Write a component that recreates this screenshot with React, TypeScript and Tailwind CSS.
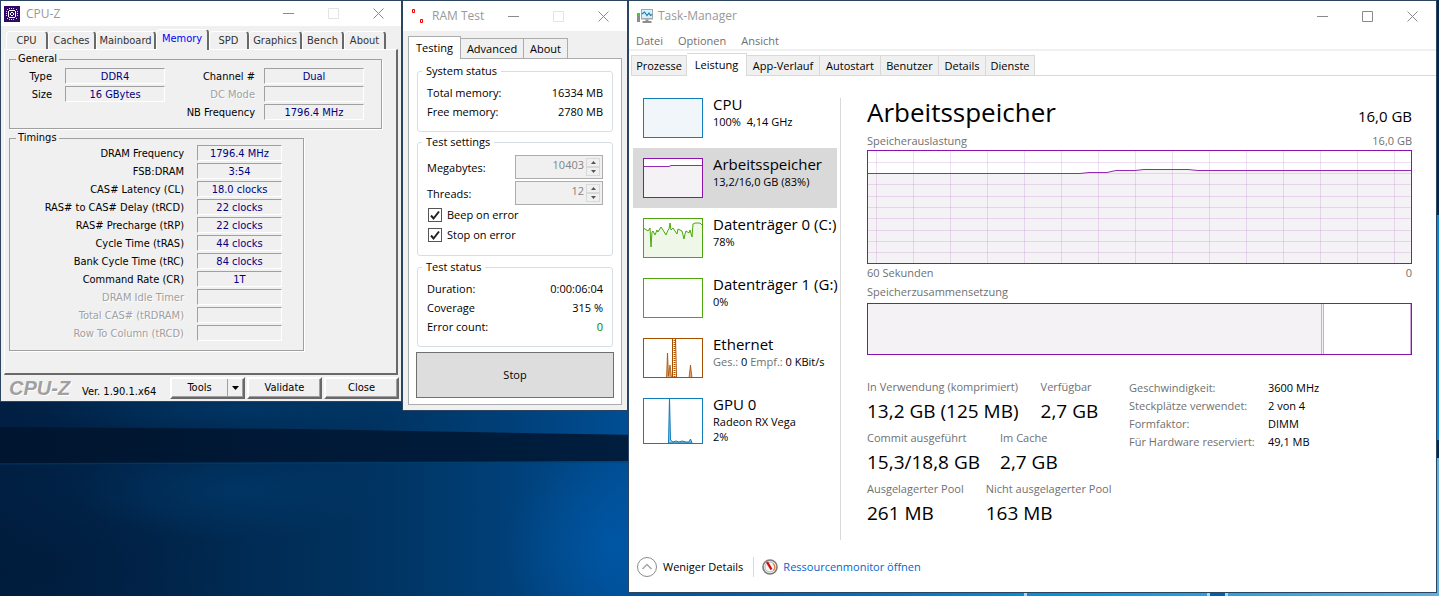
import { useId, useState } from 'react'
import type { ReactNode } from 'react'

const UI_FONT = "font-['Open_Sans','Segoe_UI',sans-serif]"
const CPUZ_FONT = "font-['DejaVu_Sans_Condensed','DejaVu_Sans',sans-serif]"

function Wallpaper() {
  return (
    <svg
      className="absolute inset-0 h-full w-full"
      viewBox="0 0 1439 596"
      preserveAspectRatio="none"
      aria-hidden="true"
    >
      <defs>
        <linearGradient id="sky" x1="0" x2="1" y1="0" y2="0">
          <stop offset="0" stopColor="#001f42" />
          <stop offset="0.14" stopColor="#00284f" />
          <stop offset="0.26" stopColor="#003360" />
          <stop offset="0.36" stopColor="#00417a" />
          <stop offset="0.44" stopColor="#004f96" />
          <stop offset="0.6" stopColor="#0070c0" />
          <stop offset="0.75" stopColor="#0a96d8" />
          <stop offset="1" stopColor="#5fb0dc" />
        </linearGradient>
        <linearGradient id="beam" x1="0" x2="1" y1="0" y2="0">
          <stop offset="0" stopColor="#00152f" />
          <stop offset="0.4" stopColor="#001d3d" />
          <stop offset="1" stopColor="#002a55" />
        </linearGradient>
        <radialGradient id="haze">
          <stop offset="0" stopColor="#005cb0" stopOpacity="0.6" />
          <stop offset="1" stopColor="#005cb0" stopOpacity="0" />
        </radialGradient>
        <radialGradient id="mist">
          <stop offset="0" stopColor="#003f74" stopOpacity="0.5" />
          <stop offset="1" stopColor="#003f74" stopOpacity="0" />
        </radialGradient>
        <radialGradient id="shade">
          <stop offset="0" stopColor="#00152f" stopOpacity="0.35" />
          <stop offset="1" stopColor="#00152f" stopOpacity="0" />
        </radialGradient>
      </defs>
      <rect width="1439" height="596" fill="url(#sky)" />
      <ellipse cx="615" cy="545" rx="110" ry="100" fill="url(#haze)" />
      <ellipse cx="230" cy="410" rx="190" ry="26" fill="url(#mist)" />
      <ellipse cx="230" cy="490" rx="160" ry="50" fill="url(#mist)" />
      <ellipse cx="40" cy="570" rx="180" ry="80" fill="url(#shade)" />
      <path d="M0 427 L300 429 L640 435 L1439 440 V458 L640 461 L0 463 Z" fill="url(#beam)" />
      <path d="M0 464 L640 462" stroke="#00406f" strokeWidth="1" opacity="0.7" />
      <path d="M1436 0 H1439 V215 H1436 Z" fill="#04264c" />
      <path d="M1436 215 H1439 V440 H1436 Z" fill="#0a86d2" />
      <path d="M1024 592 h3 v4 h-3 Z M1207 592 h3 v4 h-3 Z M1225 592 h3 v4 h-3 Z" fill="#a9d8f2" />
      <path d="M1210 592 h15 v4 h-15 Z" fill="#0060b0" />
    </svg>
  )
}

function WindowControls({ fixedSize = false }: { fixedSize?: boolean }) {
  const cell = 'grid w-[45px] place-items-center text-[#8a8a8a] hover:bg-gray-100'
  return (
    <div className="flex self-stretch">
      <button type="button" aria-label="Minimize" className={cell}>
        <svg width="11" height="11" viewBox="0 0 11 11">
          <path d="M0 5.5 H11" stroke="currentColor" />
        </svg>
      </button>
      <button type="button" aria-label="Maximize" disabled={fixedSize} className="grid w-[45px] place-items-center">
        <svg width="11" height="11" viewBox="0 0 11 11" className={fixedSize ? 'text-[#e3e3e3]' : 'text-[#8a8a8a]'}>
          <path d="M0.5 0.5 H10.5 V10.5 H0.5 Z" fill="none" stroke="currentColor" />
        </svg>
      </button>
      <button type="button" aria-label="Close" className={cell}>
        <svg width="11" height="11" viewBox="0 0 11 11">
          <path d="M0.5 0.5 L10.5 10.5 M10.5 0.5 L0.5 10.5" stroke="currentColor" />
        </svg>
      </button>
    </div>
  )
}

/* ---------- CPU-Z ---------- */

const cpuzTabs = [
  { name: 'CPU', width: 'w-[42px]' },
  { name: 'Caches', width: 'w-[48px]' },
  { name: 'Mainboard', width: 'w-[60px]' },
  { name: 'Memory', width: 'w-[53px]' },
  { name: 'SPD', width: 'w-[40px]' },
  { name: 'Graphics', width: 'w-[53px]' },
  { name: 'Bench', width: 'w-[42px]' },
  { name: 'About', width: 'w-[42px]' },
]

const timings = [
  ['DRAM Frequency', '1796.4 MHz'],
  ['FSB:DRAM', '3:54'],
  ['CAS# Latency (CL)', '18.0 clocks'],
  ['RAS# to CAS# Delay (tRCD)', '22 clocks'],
  ['RAS# Precharge (tRP)', '22 clocks'],
  ['Cycle Time (tRAS)', '44 clocks'],
  ['Bank Cycle Time (tRC)', '84 clocks'],
  ['Command Rate (CR)', '1T'],
  ['DRAM Idle Timer', ''],
  ['Total CAS# (tRDRAM)', ''],
  ['Row To Column (tRCD)', ''],
]

function ChipIcon() {
  return (
    <svg width="16" height="16" viewBox="0 0 16 16" shapeRendering="crispEdges">
      <rect width="16" height="16" fill="#2e0a66" />
      <path
        d="M5 4 h6 v1 h-6 Z M5 11 h6 v1 h-6 Z M4 5 h1 v6 h-1 Z M11 5 h1 v6 h-1 Z M7 6 h2 v1 h-2 Z M7 9 h2 v1 h-2 Z M6 7 h1 v2 h-1 Z M9 7 h1 v2 h-1 Z"
        fill="#fff"
      />
      <path
        d="M5 2 h1 v1 h-1 Z M7 2 h1 v1 h-1 Z M9 2 h1 v1 h-1 Z M5 13 h1 v1 h-1 Z M7 13 h1 v1 h-1 Z M9 13 h1 v1 h-1 Z M2 5 h1 v1 h-1 Z M2 7 h1 v1 h-1 Z M2 9 h1 v1 h-1 Z M13 5 h1 v1 h-1 Z M13 7 h1 v1 h-1 Z M13 9 h1 v1 h-1 Z M3 3 h1 v1 h-1 Z M12 3 h1 v1 h-1 Z M3 12 h1 v1 h-1 Z M12 12 h1 v1 h-1 Z"
        fill="#e6dcf5"
      />
    </svg>
  )
}

function Readout({ label, value }: { label: string; value: string }) {
  const id = useId()
  return (
    <>
      <label
        htmlFor={id}
        className={value ? 'pt-0.5 text-right text-black' : 'pt-0.5 text-right text-[#a0a0a0] [text-shadow:1px_1px_0_#fff]'}
      >
        {label}
      </label>
      <input
        id={id}
        readOnly
        value={value}
        className="h-4 w-full min-w-0 border border-t-[#a0a0a0] border-r-white border-b-white border-l-[#a0a0a0] bg-transparent text-center text-[#000080] outline-none"
      />
    </>
  )
}

function CpuzGroup({ title, children, className }: { title: string; children: ReactNode; className: string }) {
  return (
    <fieldset className={`ml-1 border border-[#a0a0a0] shadow-[1px_1px_0_#fff] ${className}`}>
      <legend className="ml-1.5 px-0.5 leading-[14px]">{title}</legend>
      {children}
    </fieldset>
  )
}

const raised =
  'border-2 border-t-white border-l-white border-r-[#696969] border-b-[#696969] shadow-[inset_-1px_-1px_0_#a0a0a0]'

function CpuzWindow() {
  const [tab, setTab] = useState('Memory')
  return (
    <section className={`w-[402px] shrink-0 border border-[#2b4560] bg-[#f0f0f0] text-[11px] leading-[14px] ${CPUZ_FONT}`}>
      <header className="flex h-[25px] items-center bg-white pl-[3px]">
        <ChipIcon />
        <h1 className={`flex-1 pl-1.5 text-xs text-[#999] ${UI_FONT}`}>CPU-Z</h1>
        <WindowControls fixedSize />
      </header>
      <nav className="mt-1 flex h-[19px] items-end pl-[5px]" role="tablist">
        {cpuzTabs.map(({ name, width }) => (
          <button
            key={name}
            type="button"
            role="tab"
            aria-selected={tab === name}
            onClick={() => setTab(name)}
            className={`${width} rounded-t-sm border-t border-l border-r-2 border-t-white border-l-white border-r-[#696969] whitespace-nowrap ${
              tab === name ? 'z-10 -mb-px h-[21px] bg-[#f0f0f0] pb-0.5 text-[#0000ff]' : 'h-[18px] text-[#333]'
            }`}
          >
            {name}
          </button>
        ))}
      </nav>
      <div className="mx-[3px] h-[326px] border border-t-white border-l-white border-r-2 border-r-[#696969] border-b-2 border-b-[#696969] pt-0.5">
        <CpuzGroup title="General" className="flex h-[77px] w-[373px] gap-[19px]">
          <div className="grid w-[155px] grid-cols-[42px_100px] content-start gap-x-[13px] gap-y-0.5 pt-0.5">
            <Readout label="Type" value="DDR4" />
            <Readout label="Size" value="16 GBytes" />
          </div>
          <div className="grid w-[180px] grid-cols-[71px_100px] content-start gap-x-[9px] gap-y-0.5 pt-0.5">
            <Readout label="Channel #" value="Dual" />
            <Readout label="DC Mode" value="" />
            <Readout label="NB Frequency" value="1796.4 MHz" />
          </div>
        </CpuzGroup>
        <CpuzGroup title="Timings" className="mt-0.5 h-[220px] w-[295px]">
          <div className="grid grid-cols-[174px_85px] gap-x-[13px] gap-y-0.5">
            {timings.map(([label, value]) => (
              <Readout key={label} label={label} value={value} />
            ))}
          </div>
        </CpuzGroup>
      </div>
      <footer className="flex items-center py-0.5 pr-0.5 pl-2">
        <strong className="w-[73px] font-['Liberation_Sans',Arial,sans-serif] text-[20px] leading-[22px] text-[#a0a0a0] italic [text-shadow:1px_1px_0_#fff]">
          CPU-Z
        </strong>
        <span className="flex-1 pt-2">Ver. 1.90.1.x64</span>
        <div className={`flex h-[22px] w-[75px] ${raised}`}>
          <button type="button" className="flex-1 border-r border-[#a0a0a0]">
            Tools
          </button>
          <button type="button" aria-label="More tools" className="grid w-[15px] place-items-center">
            <svg width="7" height="4" viewBox="0 0 7 4">
              <path d="M0 0 H7 L3.5 4 Z" fill="#000" />
            </svg>
          </button>
        </div>
        <button type="button" className={`ml-0.5 h-[22px] w-[75px] ${raised}`}>
          Validate
        </button>
        <button type="button" className={`ml-0.5 h-[22px] w-[75px] ${raised}`}>
          Close
        </button>
      </footer>
    </section>
  )
}

/* ---------- RAM Test ---------- */

const ramTabs = [
  { name: 'Testing', width: 'w-[53px]' },
  { name: 'Advanced', width: 'w-[63px]' },
  { name: 'About', width: 'w-[44px]' },
]

function RamGroup({ title, children, className }: { title: string; children: ReactNode; className: string }) {
  return (
    <fieldset className={`mx-px rounded-[3px] border border-[#d5dfe5] px-[9px] ${className}`}>
      <legend className="-ml-[5px] px-1 leading-4">{title}</legend>
      {children}
    </fieldset>
  )
}

function InfoRow({ label, value, good = false }: { label: string; value: string; good?: boolean }) {
  return (
    <div className="flex h-[19px] items-center justify-between">
      <dt>{label}</dt>
      <dd className={good ? 'text-[#008000]' : ''}>{value}</dd>
    </div>
  )
}

function SpinField({ label, value }: { label: string; value: string }) {
  const id = useId()
  return (
    <div className="flex h-6 items-center justify-between">
      <label htmlFor={id} className="pt-0.5">
        {label}
      </label>
      <div className="flex h-6 w-[88px] border border-[#acacac] bg-[#f0f0f0]">
        <input
          id={id}
          disabled
          defaultValue={value}
          className="min-w-0 flex-1 pr-0.5 pb-1 text-right text-[#838383]"
        />
        <div className="flex w-4 flex-col py-0.5 pr-0.5">
          <button type="button" disabled aria-label={`Increase ${label}`} className="grid flex-1 place-items-center border border-[#d9d9d9]">
            <svg width="5" height="3" viewBox="0 0 5 3">
              <path d="M0 3 H5 L2.5 0 Z" fill="#555" />
            </svg>
          </button>
          <button type="button" disabled aria-label={`Decrease ${label}`} className="grid flex-1 place-items-center border border-[#d9d9d9]">
            <svg width="5" height="3" viewBox="0 0 5 3">
              <path d="M0 0 H5 L2.5 3 Z" fill="#555" />
            </svg>
          </button>
        </div>
      </div>
    </div>
  )
}

function CheckRow({ label }: { label: string }) {
  return (
    <label className="flex h-5 items-center gap-[5px] pl-px">
      <span className="grid">
        <input
          type="checkbox"
          defaultChecked
          className="peer col-start-1 row-start-1 size-3.5 appearance-none border border-[#555] bg-white"
        />
        <svg
          viewBox="0 0 14 14"
          className="pointer-events-none invisible col-start-1 row-start-1 size-3.5 peer-checked:visible"
        >
          <path d="M3 7.5 L5.5 10.5 L11 3.5" fill="none" stroke="#212121" strokeWidth="2" />
        </svg>
      </span>
      {label}
    </label>
  )
}

function RamTestWindow() {
  const [tab, setTab] = useState('Testing')
  return (
    <section className={`w-[226px] shrink-0 border border-[#2b4560] bg-[#f0f0f0] text-[11px] leading-4 ${UI_FONT}`}>
      <header className="flex h-[30px] items-center bg-white pr-px pl-[9px]">
        <svg width="12" height="16" viewBox="0 0 12 16">
          <path d="M0.5 1.5 h2 v3 h-2 Z M8.5 11.5 h2 v3 h-2 Z" fill="none" stroke="#f00000" />
        </svg>
        <h1 className="flex-1 pl-2 text-xs whitespace-nowrap text-[#999]">RAM Test</h1>
        <WindowControls fixedSize />
      </header>
      <div className="px-[5px] pt-[5px] pb-[5px]">
        <nav className="flex h-[22px] items-end" role="tablist">
          {ramTabs.map(({ name, width }) => (
            <button
              key={name}
              type="button"
              role="tab"
              aria-selected={tab === name}
              onClick={() => setTab(name)}
              className={`${width} border border-b-0 border-[#acacac] ${
                tab === name ? 'z-10 -mb-px h-[23px] bg-white' : 'h-5 border-l-0 bg-[#f0f0f0]'
              }`}
            >
              {name}
            </button>
          ))}
        </nav>
        <div className="border border-[#acacac] bg-white px-[7px] pt-1 pb-1.5">
          <RamGroup title="System status" className="h-[69px]">
            <dl className="pt-1">
              <InfoRow label="Total memory:" value="16334 MB" />
              <InfoRow label="Free memory:" value="2780 MB" />
            </dl>
          </RamGroup>
          <RamGroup title="Test settings" className="mt-0.5 h-[122px]">
            <div className="flex flex-col gap-0.5 pt-[5px]">
              <SpinField label="Megabytes:" value="10403" />
              <SpinField label="Threads:" value="12" />
            </div>
            <CheckRow label="Beep on error" />
            <CheckRow label="Stop on error" />
          </RamGroup>
          <RamGroup title="Test status" className="mt-[3px] h-[88px]">
            <dl className="pt-1">
              <InfoRow label="Duration:" value="0:00:06:04" />
              <InfoRow label="Coverage" value="315 %" />
              <InfoRow label="Error count:" value="0" good />
            </dl>
          </RamGroup>
          <button type="button" className="mt-[5px] h-[46px] w-full border border-[#707070] bg-[#ddd]">
            Stop
          </button>
        </div>
      </div>
    </section>
  )
}

/* ---------- Task-Manager ---------- */

const taskTabs = [
  { name: 'Prozesse', width: 'w-[56px]' },
  { name: 'Leistung', width: 'w-[60px]' },
  { name: 'App-Verlauf', width: 'w-[73px]' },
  { name: 'Autostart', width: 'w-[61px]' },
  { name: 'Benutzer', width: 'w-[58px]' },
  { name: 'Details', width: 'w-[47px]' },
  { name: 'Dienste', width: 'w-[49px]' },
]

const diskLine =
  '0,10 2,11 5,13 7,10 8,29 9,14 10,13 12,17 14,12 15,14 18,9 20,12 23,17 25,12 26,11 27,5 28,12 30,10 32,13 34,16 35,11 39,13 41,21 42,16 43,13 46,15 47,12 49,19 50,6 52,5 57,5 60,8'

const devices: { name: string; lines: ReactNode; thumb: ReactNode }[] = [
  {
    name: 'CPU',
    lines: '100%  4,14 GHz',
    thumb: (
      <Thumb color="#117dbb">
        <rect width="60" height="40" fill="#f1f6fa" />
      </Thumb>
    ),
  },
  {
    name: 'Arbeitsspeicher',
    lines: '13,2/16,0 GB (83%)',
    thumb: (
      <Thumb color="#8b12ae">
        <path d="M0 40 V8.5 H26 L28 7.5 H60 V40 Z" fill="#f4f2f4" />
        <path d="M0 8.5 H26 L28 7.5 H60" fill="none" stroke="#9528b4" />
      </Thumb>
    ),
  },
  {
    name: 'Datenträger 0 (C:)',
    lines: '78%',
    thumb: (
      <Thumb color="#4da60c">
        <polygon points={`0,40 ${diskLine} 60,40`} fill="#eff7e9" />
        <polyline points={diskLine} fill="none" stroke="#4da60c" />
      </Thumb>
    ),
  },
  { name: 'Datenträger 1 (G:)', lines: '0%', thumb: <Thumb color="#4da60c" /> },
  {
    name: 'Ethernet',
    lines: (
      <>
        <span className="text-[#707070]">Ges.:</span> 0 <span className="text-[#707070]">Empf.:</span> 0 KBit/s
      </>
    ),
    thumb: (
      <Thumb color="#a74f01">
        <path d="M23.5 40 L24.5 15 L25.5 38 L27 27 L28.5 40 Z M46 40 L47.5 27 L49 40 Z" fill="#d9a67a" stroke="#a74f01" strokeWidth="0.8" />
        <path d="M29.5 40 V0 M33.5 40 L32.5 0" stroke="#a74f01" />
        <path d="M31.5 0 V40" stroke="#a74f01" strokeWidth="2" strokeDasharray="1 1" />
      </Thumb>
    ),
  },
  {
    name: 'GPU 0',
    lines: (
      <>
        Radeon RX Vega
        <br />
        2%
      </>
    ),
    thumb: (
      <Thumb color="#117dbb" tall>
        <path d="M25.5 45 L26.5 0 L27.5 42 L30 44 L33 43 L36 44 L39 43 L43 44 L46 44 L47.5 41 L49 45 Z" fill="#9cc8e2" stroke="#117dbb" />
      </Thumb>
    ),
  },
]

function Thumb({ color, tall = false, children }: { color: string; tall?: boolean; children?: ReactNode }) {
  const h = tall ? 46 : 40
  return (
    <svg width="60" height={h} viewBox={`0 0 60 ${h}`} className="shrink-0 bg-white">
      {children}
      <rect x="0.5" y="0.5" width="59" height={h - 1} fill="none" stroke={color} />
    </svg>
  )
}

function MonitorIcon() {
  return (
    <svg width="16" height="16" viewBox="0 0 16 16">
      <path d="M0 5 H3 V14 H0 Z" fill="#8c8c8c" />
      <path d="M1 6 H2 V8 H1 Z" fill="#4ed12f" />
      <path d="M4 1 H16 V11.5 H4 Z" fill="#a3a8ab" />
      <path d="M5 2 H15 V10 H5 Z" fill="#d4f1fc" />
      <path d="M5 6 L7.5 4 L10 7.5 L12 5 L13.5 7.5 L15 6.5" fill="none" stroke="#1c7fb8" strokeWidth="1.2" />
      <path d="M8.5 11.5 H11.5 V13 H8.5 Z M5.5 13 H14.5 V15 H5.5 Z" fill="#8f8f8f" />
    </svg>
  )
}

function GaugeIcon() {
  return (
    <svg width="16" height="16" viewBox="0 0 16 16">
      <circle cx="8" cy="8" r="7" fill="#f6f6f6" stroke="#7b7b7b" strokeWidth="1.6" />
      <circle cx="8" cy="8" r="5" fill="none" stroke="#b5b5b5" />
      <path d="M11 4.5 A5 5 0 0 1 11.5 11.5" fill="none" stroke="#e8803a" strokeWidth="1.2" />
      <path d="M5 3 L9.5 10.5" stroke="#cc1010" strokeWidth="2.4" />
    </svg>
  )
}

function MemoryGraph() {
  const columns = Array.from({ length: 15 }, (_, i) => 9.5 + i * 37)
  const rows = [12.5, 23.5, 34.5, 46.5, 57.5, 68.5, 80.5, 91.5, 102.5]
  const line = 'M0 23.5 H213 L222 22.5 H240 L249 20.5 H268 L277 19.5 H321 L331 20.5 H545'
  return (
    <svg className="h-[114px] w-full" viewBox="0 0 545 114" preserveAspectRatio="none">
      <path d={`${line} V114 H0 Z`} fill="#f4f2f4" />
      <g stroke="#9528b4" strokeOpacity="0.15">
        {columns.map((x) => (
          <path key={x} d={`M${x} 0 V114`} />
        ))}
        {rows.map((y) => (
          <path key={y} d={`M0 ${y} H545`} />
        ))}
      </g>
      <path d={line} fill="none" stroke="#9528b4" />
      <rect x="0.5" y="0.5" width="544" height="113" fill="none" stroke="#8b12ae" />
    </svg>
  )
}

function Stat({ label, value }: { label: string; value: string }) {
  return (
    <div>
      <dt className="leading-4 text-[#707070]">{label}</dt>
      <dd className="mt-0.5 text-[19px] leading-7">{value}</dd>
    </div>
  )
}

const hardware = [
  ['Geschwindigkeit:', '3600 MHz'],
  ['Steckplätze verwendet:', '2 von 4'],
  ['Formfaktor:', 'DIMM'],
  ['Für Hardware reserviert:', '49,1 MB'],
]

function TaskManagerWindow() {
  const [tab, setTab] = useState('Leistung')
  const [device, setDevice] = useState('Arbeitsspeicher')
  return (
    <section className={`mr-0.5 mb-[3px] flex min-w-0 flex-1 flex-col self-stretch border border-[#2b4560] bg-white text-[11px] leading-4 text-black ${UI_FONT}`}>
      <header className="flex h-[30px] items-center pr-px pl-2">
        <MonitorIcon />
        <h1 className="flex-1 pl-[5px] text-xs text-[#999]">Task-Manager</h1>
        <WindowControls />
      </header>
      <nav className="flex h-5 gap-[15px] border-b-2 border-[#f0f0f0] pt-0.5 pl-[7px] text-[#707070]">
        <button type="button">Datei</button>
        <button type="button">Optionen</button>
        <button type="button">Ansicht</button>
      </nav>
      <div className="mt-0.5 flex h-[23px] items-end pl-0.5" role="tablist">
        {taskTabs.map(({ name, width }) => (
          <button
            key={name}
            type="button"
            role="tab"
            aria-selected={tab === name}
            onClick={() => setTab(name)}
            className={`${width} border-t border-r border-[#d9d9d9] whitespace-nowrap first:border-l ${
              tab === name ? 'h-[23px] bg-white' : 'h-[21px] border-b bg-[#f0f0f0]'
            }`}
          >
            {name}
          </button>
        ))}
        <span className="flex-1 border-b border-[#d9d9d9]" />
      </div>
      <div className="flex flex-1 pt-3 pr-6 pb-0.5 pl-1">
        <ul className="w-[204px] shrink-0">
          {devices.map(({ name, lines, thumb }) => (
            <li key={name}>
              <button
                type="button"
                onClick={() => setDevice(name)}
                className={`flex min-h-[60px] w-full gap-2.5 pt-2.5 pl-2.5 text-left ${device === name ? 'bg-[#d9d9d9]' : ''}`}
              >
                {thumb}
                <span className="-mt-1 whitespace-pre">
                  <span className="block text-[15px] leading-5">{name}</span>
                  <span className="block leading-[15px]">{lines}</span>
                </span>
              </button>
            </li>
          ))}
        </ul>
        <div className="mt-2.5 ml-[3px] border-l border-[#d9d9d9]" />
        <main className="ml-[26px] min-w-0 flex-1 pt-1.5">
          <div className="flex items-baseline justify-between">
            <h2 className="text-[26px] leading-9">Arbeitsspeicher</h2>
            <span className="text-[15px]">16,0 GB</span>
          </div>
          <div className="mt-[3px] mb-px flex justify-between text-[#707070]">
            <span>Speicherauslastung</span>
            <span>16,0 GB</span>
          </div>
          <MemoryGraph />
          <div className="mt-px flex justify-between text-[#707070]">
            <span>60 Sekunden</span>
            <span>0</span>
          </div>
          <p className="my-[3px] text-[#707070]">Speicherzusammensetzung</p>
          <div className="flex h-[52px] border border-[#8b12ae]">
            <div className="w-5/6 bg-[#f4f2f4]" />
            <div className="w-[3px] border-x border-[#cda8d9] bg-[#f4f2f4]" />
            <div className="flex-1 border-r border-[#cda8d9]" />
          </div>
          <div className="mt-6 flex gap-3">
            <div className="flex w-[250px] flex-col gap-[5px] whitespace-nowrap">
              <dl className="flex gap-[22px]">
                <Stat label="In Verwendung (komprimiert)" value="13,2 GB (125 MB)" />
                <Stat label="Verfügbar" value="2,7 GB" />
              </dl>
              <dl className="flex gap-5">
                <Stat label="Commit ausgeführt" value="15,3/18,8 GB" />
                <Stat label="Im Cache" value="2,7 GB" />
              </dl>
              <dl className="flex gap-[22px]">
                <Stat label="Ausgelagerter Pool" value="261 MB" />
                <Stat label="Nicht ausgelagerter Pool" value="163 MB" />
              </dl>
            </div>
            <table className="self-start">
              <tbody>
                {hardware.map(([label, value]) => (
                  <tr key={label} className="h-[18px]">
                    <th scope="row" className="w-[139px] p-0 text-left font-normal whitespace-nowrap text-[#707070]">
                      {label}
                    </th>
                    <td className="p-0">{value}</td>
                  </tr>
                ))}
              </tbody>
            </table>
          </div>
        </main>
      </div>
      <footer className="flex h-[50px] items-center pl-2">
        <button type="button" className="flex items-center gap-1.5 border-r border-[#d9d9d9] pr-2.5">
          <svg width="20" height="20" viewBox="0 0 20 20">
            <circle cx="10" cy="10" r="9.5" fill="none" stroke="#8a8a8a" />
            <path d="M5.5 12 L10 7.5 L14.5 12" fill="none" stroke="#a8a8a8" strokeWidth="1.5" />
          </svg>
          Weniger Details
        </button>
        <a href="#" className="flex items-center gap-[5px] pl-2 text-[#0066cc]">
          <GaugeIcon />
          Ressourcenmonitor öffnen
        </a>
      </footer>
    </section>
  )
}

export default function App() {
  return (
    <div className="relative isolate flex min-h-screen items-start overflow-hidden bg-[#001f42]">
      <Wallpaper />
      <div className="z-10 flex flex-1 items-start self-stretch">
        <CpuzWindow />
        <RamTestWindow />
        <TaskManagerWindow />
      </div>
    </div>
  )
}
